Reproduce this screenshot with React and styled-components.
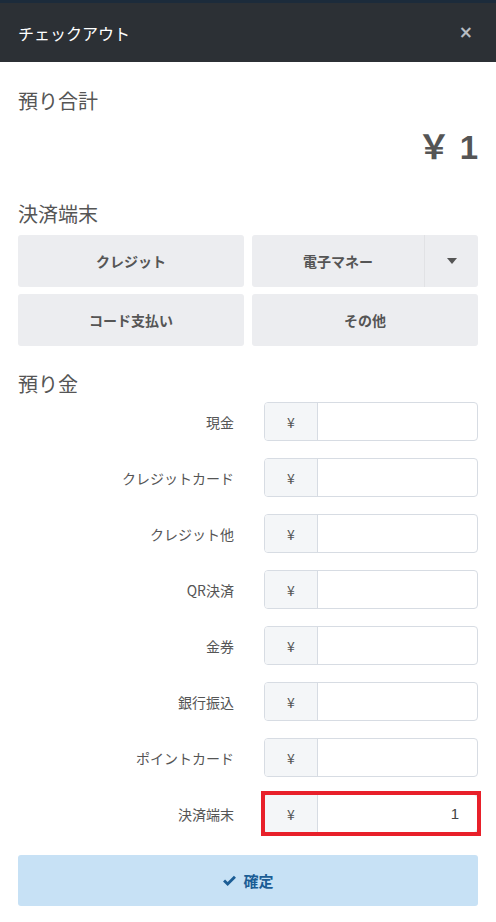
import styled, { createGlobalStyle } from "styled-components";

const Global = createGlobalStyle`
  body {
    margin: 0;
    background: #fff;
    font-family: "Noto Sans CJK JP", "Noto Sans", sans-serif;
    color: #555;
  }
  * { box-sizing: border-box; }
`;

const fields = [
  { label: "現金", value: "" },
  { label: "クレジットカード", value: "" },
  { label: "クレジット他", value: "" },
  { label: "QR決済", value: "" },
  { label: "金券", value: "" },
  { label: "銀行振込", value: "" },
  { label: "ポイントカード", value: "" },
  { label: "決済端末", value: "1", active: true },
];

function App() {
  return (
    <Modal>
      <Global />
      <Header>
        <Title>チェックアウト</Title>
        <Close>×</Close>
      </Header>
      <Body>
        <Heading>預り合計</Heading>
        <Amount>￥ 1</Amount>
        <Heading $top={32}>決済端末</Heading>
        <ButtonGrid>
          <TermButton>クレジット</TermButton>
          <Split>
            <TermButton $flat>電子マネー</TermButton>
            <Caret>
              <svg width="10" height="6" viewBox="0 0 10 6">
                <path d="M0 0h10L5 6z" fill="#555" />
              </svg>
            </Caret>
          </Split>
          <TermButton>コード支払い</TermButton>
          <TermButton>その他</TermButton>
        </ButtonGrid>
        <Heading $top={24}>預り金</Heading>
        <Form>
          {fields.map((f) => (
            <Row key={f.label}>
              <Label>{f.label}</Label>
              <InputGroup $active={f.active}>
                <Prefix>¥</Prefix>
                <Input readOnly value={f.value} />
              </InputGroup>
            </Row>
          ))}
        </Form>
        <Confirm>
          <svg width="15" height="12" viewBox="0 0 16 13">
            <path d="M1 7l2.2-2.2L6 7.6 12.8 0.8 15 3 6 12z" fill="#1c5d95" />
          </svg>
          確定
        </Confirm>
      </Body>
    </Modal>
  );
}

const Modal = styled.div`
  width: 496px;
  min-height: 922px;
  background: #fff;
`;

const Header = styled.div`
  height: 62px;
  border-top: 3px solid #1c2b3b;
  background: #2c3035;
  display: flex;
  align-items: center;
  justify-content: space-between;
  padding: 0 23px 0 18px;
`;

const Title = styled.div`
  color: #fff;
  font-size: 16px;
`;

const Close = styled.div`
  color: #b8bcc2;
  font-size: 17px;
  font-weight: bold;
  line-height: 1;
  font-family: "DejaVu Sans", sans-serif;
`;

const Body = styled.div`
  padding: 25px 18px 0;
  display: flex;
  flex-direction: column;
`;

const Heading = styled.div`
  font-size: 20px;
  line-height: 28px;
  color: #555;
  margin-top: ${(p) => p.$top || 0}px;
`;

const Amount = styled.div`
  margin-top: 13px;
  text-align: right;
  font-size: 33px;
  line-height: 40px;
  font-weight: bold;
  color: #555;
  font-family: "Liberation Sans", "Noto Sans CJK JP", sans-serif;
`;

const ButtonGrid = styled.div`
  margin-top: 7px;
  display: grid;
  grid-template-columns: 1fr 1fr;
  gap: 7px 8px;
`;

const TermButton = styled.div`
  flex: 1;
  height: 52px;
  display: flex;
  align-items: center;
  justify-content: center;
  background: #ecedf0;
  border-radius: ${(p) => (p.$flat ? "3px 0 0 3px" : "3px")};
  font-size: 14px;
  font-weight: bold;
  color: #555;
`;

const Split = styled.div`
  display: flex;
`;

const Caret = styled.div`
  width: 54px;
  height: 52px;
  display: flex;
  align-items: center;
  justify-content: center;
  background: #ecedf0;
  border-left: 1px solid #e1e2e5;
  border-radius: 0 3px 3px 0;
`;

const Form = styled.div`
  margin-top: 4px;
  display: flex;
  flex-direction: column;
  gap: 17px;
`;

const Row = styled.div`
  display: grid;
  grid-template-columns: 1fr 214px;
  column-gap: 30px;
  align-items: center;
`;

const Label = styled.div`
  text-align: right;
  font-size: 14px;
  color: #555;
`;

const InputGroup = styled.div`
  position: relative;
  display: flex;
  height: 39px;
  border: 1px solid #d7dce3;
  border-radius: 4px;

  &::after {
    content: "";
    display: ${(p) => (p.$active ? "block" : "none")};
    position: absolute;
    inset: -4px;
    border: 4px solid #e8202a;
    pointer-events: none;
  }
`;

const Prefix = styled.div`
  width: 53px;
  display: flex;
  align-items: center;
  justify-content: center;
  background: #f4f6f8;
  border-right: 1px solid #d7dce3;
  border-radius: 3px 0 0 3px;
  font-size: 14px;
  color: #555;
`;

const Input = styled.input`
  flex: 1;
  min-width: 0;
  border: none;
  outline: none;
  background: transparent;
  padding: 0 18px;
  text-align: right;
  font-size: 15px;
  color: #444;
  font-family: "Liberation Sans", sans-serif;
`;

const Confirm = styled.div`
  margin-top: 22px;
  height: 51px;
  display: flex;
  align-items: center;
  justify-content: center;
  gap: 6px;
  background: #c7e1f5;
  border-radius: 3px;
  color: #1c5d95;
  font-size: 15px;
  font-weight: bold;
`;

export default App;
